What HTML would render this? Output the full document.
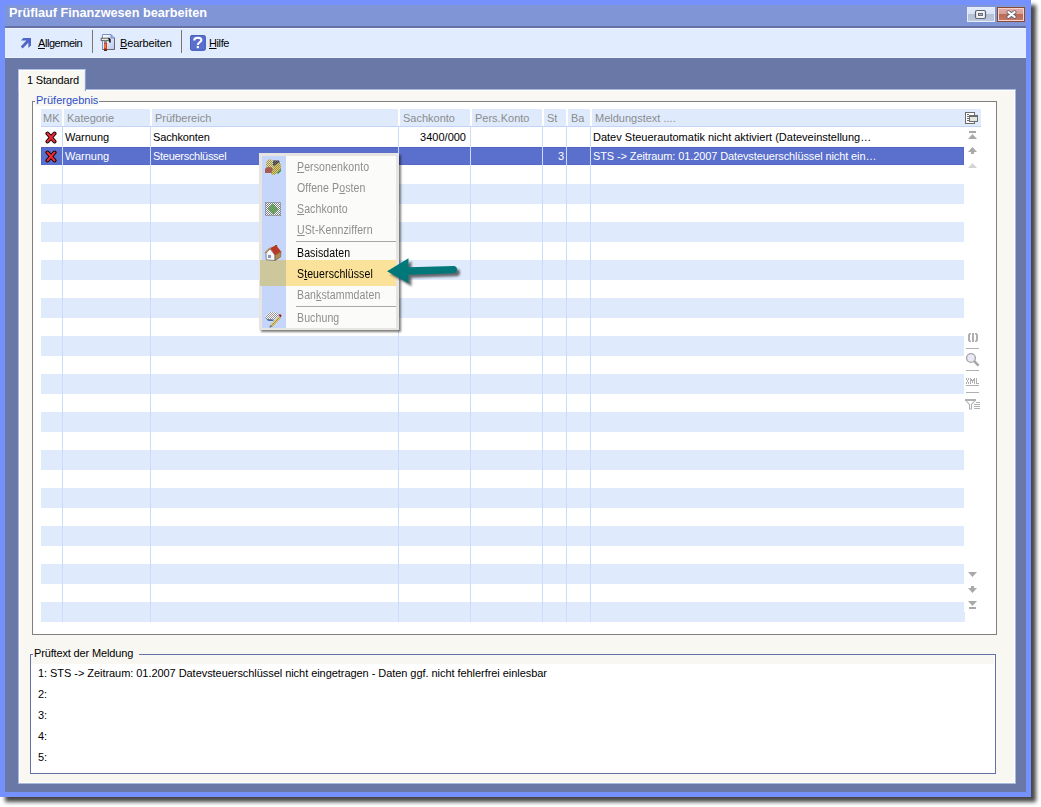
<!DOCTYPE html>
<html><head><meta charset="utf-8"><style>
*{margin:0;padding:0;box-sizing:border-box}
html,body{width:1041px;height:807px;overflow:hidden;background:#fff;position:relative;font-family:"Liberation Sans",sans-serif;font-size:11px;color:#000}
div{position:absolute}
.t{white-space:nowrap;line-height:13px;font-size:11px}
.r{left:41px;width:923px;height:20px}
.hc{top:109px;height:17px;background:#dfebfd}
.cl{top:127px;width:1px;height:495px;background:#cbdcfa}
.sl{top:147px;width:1px;height:18px;background:#cbdcfa}
.gt{color:#a0a0a0}
.ht{color:#8c8c8c}
u{text-decoration:underline;text-decoration-thickness:1px;text-underline-offset:1px}
</style></head><body>
<div id="shadow" style="left:0;top:0;width:1031px;height:797px;box-shadow:5px 5px 4px rgba(0,0,0,.72)"></div>
<div id="win" style="left:0;top:0;width:1031px;height:797px;background:#7591fe"></div>
<div style="left:5px;top:5px;width:1021px;height:21px;background:#7f95d6"></div>
<div class="t" style="left:9px;top:6px;color:#fff;font-weight:bold;font-size:12.7px;line-height:15px">Prüflauf Finanzwesen bearbeiten</div>
<div style="left:967px;top:7px;width:28px;height:15px;background:linear-gradient(#e2ebfb 0,#d8e3f6 46%,#b3c0d6 46%,#bcc8dc 100%);border:1px solid #e6eefc"></div>
<svg style="position:absolute;left:967px;top:7px" width="28" height="15" viewBox="0 0 28 15">
 <rect x="8.5" y="3.5" width="10" height="8" rx="1.5" fill="#f2f2f0" stroke="#5c6070" stroke-width="1.2"/>
 <rect x="11.5" y="6.5" width="4" height="2" fill="#a8bccc" stroke="#5c6070" stroke-width="0.9"/>
</svg>
<div style="left:997px;top:7px;width:28px;height:15px;background:linear-gradient(#e2aca4 0,#d89e96 46%,#bc6a56 46%,#c47864 100%);border:1px solid #8a4a3a;box-shadow:inset 0 0 0 1px #f4d4cc"></div>
<svg style="position:absolute;left:997px;top:7px" width="28" height="15" viewBox="0 0 28 15">
 <path d="M11.4,5.2 L17.6,9.8 M17.6,5.2 L11.4,9.8" stroke="#5a5e6a" stroke-width="3.8" stroke-linecap="round"/>
 <path d="M11.4,5.2 L17.6,9.8 M17.6,5.2 L11.4,9.8" stroke="#ffffff" stroke-width="2.2" stroke-linecap="round"/>
</svg>
<div style="left:5px;top:26px;width:1021px;height:2px;background:#6670a6"></div>
<div style="left:5px;top:28px;width:1021px;height:30px;background:#e1edfe;border-top:1px solid #eef5ff;border-bottom:1px solid #ecf4ff"></div>
<div style="left:5px;top:58px;width:1021px;height:734px;background:#6a78a7"></div>
<!-- toolbar -->
<div class="t" style="left:38px;top:37px;letter-spacing:-0.45px"><u>A</u>llgemein</div>
<div style="left:92px;top:30px;width:1px;height:23px;background:#7a7870"></div>
<div class="t" style="left:120px;top:37px;letter-spacing:-0.16px"><u>B</u>earbeiten</div>
<div style="left:181px;top:30px;width:1px;height:23px;background:#7a7870"></div>
<div class="t" style="left:209px;top:37px;letter-spacing:-0.4px"><u>H</u>ilfe</div>
<div style="left:190px;top:35px;width:16px;height:16px;background:#5b6fc8;border-radius:3px"></div>
<!-- tab + panel -->
<div style="left:18px;top:89px;width:998px;height:695px;background:#f8f7f2;border:1px solid #a8b8de;box-shadow:inset 1px 1px 0 #fff,inset -1px -1px 0 #fdfdfa"></div>
<div style="left:18px;top:69px;width:68px;height:22px;background:#f8f7f2;border-top:1px solid #b4c2e6;border-left:1px solid #b4c2e6;border-right:1px solid #8e9cce;box-shadow:inset 1px 1px 0 #fff,inset -1px 0 0 #e4eaf6"></div>
<div style="left:19px;top:90px;width:65px;height:1px;background:#f8f7f2"></div>
<div class="t" style="left:27px;top:74px;letter-spacing:-0.2px">1 Standard</div>
<!-- group box 1 -->
<div style="left:32px;top:101px;width:965px;height:534px;background:#fff;border:1px solid #808080"></div>
<div style="left:35px;top:95px;width:64px;height:11px;background:#f8f7f2"></div>
<div class="t" style="left:36px;top:94px;color:#2f4ecb">Prüfergebnis</div>
<div class="hc" style="left:41px;width:21px"></div><div class="hc" style="left:64px;width:86px"></div><div class="hc" style="left:152px;width:246px"></div><div class="hc" style="left:400px;width:70px"></div><div class="hc" style="left:472px;width:70px"></div><div class="hc" style="left:544px;width:22px"></div><div class="hc" style="left:568px;width:22px"></div><div class="hc" style="left:592px;width:389px"></div>
<div style="left:41px;top:126px;width:940px;height:1px;background:#c3d5f7"></div>
<div class="r" style="top:184px;background:#dfebfd"></div><div class="r" style="top:222px;background:#dfebfd"></div><div class="r" style="top:260px;background:#dfebfd"></div><div class="r" style="top:298px;background:#dfebfd"></div><div class="r" style="top:336px;background:#dfebfd"></div><div class="r" style="top:374px;background:#dfebfd"></div><div class="r" style="top:412px;background:#dfebfd"></div><div class="r" style="top:450px;background:#dfebfd"></div><div class="r" style="top:488px;background:#dfebfd"></div><div class="r" style="top:526px;background:#dfebfd"></div><div class="r" style="top:564px;background:#dfebfd"></div><div class="r" style="top:602px;background:#dfebfd"></div>
<div class="cl" style="left:62px"></div><div class="cl" style="left:150px"></div><div class="cl" style="left:398px"></div><div class="cl" style="left:470px"></div><div class="cl" style="left:542px"></div><div class="cl" style="left:566px"></div><div class="cl" style="left:590px"></div>
<div style="left:964px;top:612px;width:1px;height:10px;background:#dfebfd"></div>
<div style="left:41px;top:147px;width:923px;height:18px;background:#5a70cc;box-shadow:inset 1px 1px 0 #5064c6,inset -1px -1px 0 #5468c8"></div>
<div class="sl" style="left:62px"></div><div class="sl" style="left:150px"></div><div class="sl" style="left:398px"></div><div class="sl" style="left:470px"></div><div class="sl" style="left:542px"></div><div class="sl" style="left:566px"></div><div class="sl" style="left:590px"></div>
<div class="t" style="left:43px;top:112px;color:#8c8c8c">MK</div>
<div class="t" style="left:67px;top:112px;color:#8c8c8c">Kategorie</div>
<div class="t" style="left:155px;top:112px;color:#8c8c8c">Prüfbereich</div>
<div class="t" style="left:403px;top:112px;color:#8c8c8c">Sachkonto</div>
<div class="t" style="left:475px;top:112px;color:#8c8c8c">Pers.Konto</div>
<div class="t" style="left:547px;top:112px;color:#8c8c8c">St</div>
<div class="t" style="left:571px;top:112px;color:#8c8c8c">Ba</div>
<div class="t" style="left:595px;top:112px;color:#8c8c8c">Meldungstext ....</div>
<div class="t" style="left:65px;top:131px;">Warnung</div>
<div class="t" style="left:153px;top:131px;letter-spacing:-0.15px">Sachkonten</div>
<div class="t" style="left:400px;top:131px;width:66px;text-align:right">3400/000</div>
<div class="t" style="left:593px;top:131px;">Datev Steuerautomatik nicht aktiviert (Dateveinstellung…</div>
<div class="t" style="left:65px;top:150px;color:#fff">Warnung</div>
<div class="t" style="left:153px;top:150px;color:#fff;letter-spacing:-0.29px">Steuerschlüssel</div>
<div class="t" style="left:544px;top:150px;width:20px;text-align:right;color:#fff">3</div>
<div class="t" style="left:593px;top:150px;color:#fff;letter-spacing:-0.11px">STS -&gt; Zeitraum: 01.2007 Datevsteuerschlüssel nicht ein…</div>
<!-- group box 2 -->
<div style="left:30px;top:654px;width:966px;height:120px;background:#fff;border:1px solid #6271a8"></div>
<div style="left:31px;top:655px;width:963px;height:9px;background:#f8f7f2"></div>
<div style="left:33px;top:648px;width:106px;height:10px;background:#f8f7f2"></div>
<div class="t" style="left:34px;top:647px;letter-spacing:-0.15px">Prüftext der Meldung</div>
<div class="t" style="left:38px;top:667px;letter-spacing:-0.053px">1: STS -&gt; Zeitraum: 01.2007 Datevsteuerschlüssel nicht eingetragen - Daten ggf. nicht fehlerfrei einlesbar</div>
<div class="t" style="left:38px;top:688px;">2:</div>
<div class="t" style="left:38px;top:709px;">3:</div>
<div class="t" style="left:38px;top:730px;">4:</div>
<div class="t" style="left:38px;top:751px;">5:</div>
<!-- context menu -->
<div style="left:259px;top:153px;width:140px;height:177px;background:#e6e5e2;box-shadow:2px 2px 2px rgba(0,0,0,.5)"></div>
<div style="left:262px;top:156px;width:134px;height:172px;background:#fbfbf9"></div>
<div style="left:262px;top:156px;width:24px;height:172px;background:#c6d6fa"></div>
<div style="left:260px;top:260px;width:136px;height:26px;background:#fbe29a"></div>
<div style="left:260px;top:260px;width:26px;height:26px;background:#cdc79c"></div>
<div style="left:296px;top:241px;width:100px;height:1px;background:#a8a8a8"></div>
<div style="left:296px;top:306px;width:100px;height:1px;background:#a8a8a8"></div>
<div class="t" style="left:297px;top:161px;color:#8e8e8e;font-size:12px;letter-spacing:0.1px;transform:scaleX(0.88);transform-origin:0 0"><u>P</u>ersonenkonto</div>
<div class="t" style="left:297px;top:182px;color:#8e8e8e;font-size:12px;letter-spacing:0.1px;transform:scaleX(0.88);transform-origin:0 0">Offene P<u>o</u>sten</div>
<div class="t" style="left:297px;top:203px;color:#8e8e8e;font-size:12px;letter-spacing:0.1px;transform:scaleX(0.88);transform-origin:0 0"><u>S</u>achkonto</div>
<div class="t" style="left:297px;top:224px;color:#8e8e8e;font-size:12px;letter-spacing:0.1px;transform:scaleX(0.88);transform-origin:0 0"><u>U</u>St-Kennziffern</div>
<div class="t" style="left:297px;top:247px;font-size:12px;letter-spacing:0.1px;transform:scaleX(0.88);transform-origin:0 0">Basisdaten</div>
<div class="t" style="left:297px;top:268px;font-size:12px;letter-spacing:0.1px;transform:scaleX(0.88);transform-origin:0 0">S<u>t</u>euerschlüssel</div>
<div class="t" style="left:297px;top:289px;color:#8e8e8e;font-size:12px;letter-spacing:0.1px;transform:scaleX(0.88);transform-origin:0 0">Ban<u>k</u>stammdaten</div>
<div class="t" style="left:297px;top:312px;color:#8e8e8e;font-size:12px;letter-spacing:0.1px;transform:scaleX(0.88);transform-origin:0 0">Buchung</div>

<!-- ICONS -->
<svg style="position:absolute;left:18px;top:34px" width="16" height="16" viewBox="0 0 16 16">
 <path d="M5.2,4 L13,4 L13,11.6 L10.4,14 L10.4,8.8 L4.6,14.4 L2.8,12.6 L8.4,6.6 L3,6.6 Z" fill="#4f67c9"/>
</svg>
<svg style="position:absolute;left:99px;top:32px" width="20" height="20" viewBox="0 0 20 20">
 <defs><linearGradient id="dg" x1="0" y1="0" x2="1" y2="1"><stop offset="0" stop-color="#ffffff"/><stop offset="1" stop-color="#b8c8f4"/></linearGradient></defs>
 <path d="M3.5,2.5 L12,2.5 L15.5,6 L15.5,17.5 L3.5,17.5 Z" fill="url(#dg)" stroke="#8090c8" stroke-width="1"/>
 <path d="M15.5,6 L15.5,17.5 L3.5,17.5" fill="none" stroke="#6a6a6a" stroke-width="1"/>
 <path d="M12,2.5 L12,6 L15.5,6" fill="#9ab4f0" stroke="#6a7ab8" stroke-width="0.8"/>
 <rect x="2.2" y="6.2" width="7.8" height="2.4" fill="#e8e8e8" stroke="#606060" stroke-width="1"/>
 <path d="M9.5,6.5 C11,6.5 11.2,8 10.8,10.5" fill="none" stroke="#101010" stroke-width="1.6"/>
 <rect x="5" y="8.5" width="3" height="2.5" fill="#8a8a8a"/>
 <rect x="5" y="11" width="3" height="7.6" fill="#d83a10"/>
 <rect x="5.6" y="12" width="1" height="4" fill="#f4b060"/>
 <rect x="5" y="17.6" width="3" height="1.2" fill="#202020"/>
</svg>
<svg style="position:absolute;left:190px;top:35px" width="16" height="16" viewBox="0 0 16 16">
 <rect x="0.5" y="0.5" width="14.5" height="14.5" rx="1.6" fill="#5a70cc" stroke="#4a60c2" stroke-width="1"/>
 <path d="M4.2,5.4 C4.2,1.9 11.4,1.9 11.4,5 C11.4,7.2 7.8,7.4 7.8,10" fill="none" stroke="#ffffff" stroke-width="2.1"/>
 <rect x="6.7" y="11" width="2.2" height="2.2" fill="#ffffff"/>
</svg>
<svg style="position:absolute;left:45px;top:131px" width="12" height="13" viewBox="0 0 12 13">
 <path d="M2.5,2.5 L9.5,10.5 M9.5,2.5 L2.5,10.5" stroke="#000" stroke-width="4" stroke-linecap="round"/>
 <path d="M2.5,2.5 L9.5,10.5 M9.5,2.5 L2.5,10.5" stroke="#f02a34" stroke-width="2.2" stroke-linecap="round"/>
</svg>
<svg style="position:absolute;left:45px;top:150px" width="12" height="13" viewBox="0 0 12 13">
 <path d="M2.5,2.5 L9.5,10.5 M9.5,2.5 L2.5,10.5" stroke="#000" stroke-width="4" stroke-linecap="round"/>
 <path d="M2.5,2.5 L9.5,10.5 M9.5,2.5 L2.5,10.5" stroke="#f02a34" stroke-width="2.2" stroke-linecap="round"/>
</svg>
<svg style="position:absolute;left:964px;top:111px" width="16" height="14" viewBox="0 0 16 14">
 <rect x="1.5" y="1.5" width="9" height="11" fill="#fff" stroke="#6c6c6c" stroke-width="1"/>
 <path d="M3,3.5 H5 M3,5.5 H5 M3,7.5 H5 M3,9.5 H5" stroke="#6c6c6c" stroke-width="1"/>
 <rect x="5.5" y="4.5" width="8" height="6" fill="#e6e6de" stroke="#6c6c6c" stroke-width="1"/>
 <rect x="5" y="4" width="9" height="2" fill="#6c6c6c"/>
</svg>
<!-- side icons -->
<svg style="position:absolute;left:964px;top:128px" width="18" height="500" viewBox="0 0 18 500">
 <g fill="#a9a9a9">
  <rect x="5" y="3" width="7" height="2"/>
  <path d="M4,11 L8.5,6 L13,11 Z"/>
  <path d="M4,24 L8.5,19 L13,24 Z"/><rect x="7" y="24" width="3" height="2"/>
  <path d="M4,40 L8.5,35 L13,40 Z" fill="#d4d4d4"/>
  <path d="M4,444 L8.5,449 L13,444 Z"/>
  <rect x="7" y="458" width="3" height="2"/><path d="M4,460 L8.5,465 L13,460 Z"/>
  <path d="M4,473 L8.5,478 L13,473 Z"/><rect x="5" y="479" width="7" height="2"/>
 </g>
</svg>
<svg style="position:absolute;left:964px;top:330px" width="18" height="82" viewBox="0 0 18 82">
 <g fill="#b0b0b0">
  <rect x="4" y="4" width="2" height="7"/><rect x="5" y="3" width="2" height="1.6"/><rect x="5" y="10.4" width="2" height="1.6"/>
  <rect x="8" y="3" width="2" height="9"/>
  <rect x="12" y="4" width="2" height="7"/><rect x="11" y="3" width="2" height="1.6"/><rect x="11" y="10.4" width="2" height="1.6"/>
  <rect x="2" y="18" width="13" height="1"/>
  <rect x="2" y="40" width="13" height="1"/>
  <rect x="2" y="48" width="1" height="1"/><rect x="4" y="48" width="1" height="1"/><rect x="2" y="49" width="1" height="1"/><rect x="4" y="49" width="1" height="1"/><rect x="2" y="52" width="1" height="1"/><rect x="4" y="52" width="1" height="1"/><rect x="2" y="53" width="1" height="1"/><rect x="4" y="53" width="1" height="1"/><rect x="3" y="50" width="1" height="2"/><rect x="6" y="48" width="1" height="6"/><rect x="10" y="48" width="1" height="6"/><rect x="7" y="49" width="1" height="2"/><rect x="9" y="49" width="1" height="2"/><rect x="8" y="50" width="1" height="3"/><rect x="12" y="48" width="1" height="6"/><rect x="12" y="53" width="3" height="1"/>
  <rect x="2" y="55" width="13" height="1"/>
  <rect x="2" y="62" width="13" height="1"/>
  <rect x="1" y="69" width="11" height="2"/>
  
 </g>
 <circle cx="7" cy="28" r="4.4" fill="#e8e8f6" stroke="#a8a8a8" stroke-width="1.4"/>
 <path d="M10.2,31.2 L14.6,35.6" stroke="#a8a8a8" stroke-width="2.6"/>
 <path d="M1.8,70.5 L5.5,74.5 V79 H7.5 V74.5 L11.2,70.5" fill="none" stroke="#b0b0b0" stroke-width="1.1"/>
 <path d="M12,72.5 H16 M10,74.5 H16 M10,76.5 H16 M10,78.5 H16" stroke="#b0b0b0" stroke-width="1"/>
</svg>
<!-- menu icons -->
<svg style="position:absolute;left:265px;top:159px" width="16" height="16" viewBox="0 0 16 16">
 <defs><pattern id="ck1" width="2" height="2" patternUnits="userSpaceOnUse"><rect width="1" height="1" fill="#7a7a8a"/><rect x="1" y="1" width="1" height="1" fill="#7a7a8a"/></pattern>
 <clipPath id="cp1"><ellipse cx="5" cy="5.5" rx="4" ry="5.2"/><path d="M8,1.5 L14,1.5 L15,5 L10,9 L8,6 Z"/><path d="M0,11 Q0,8 4,8 Q8,8 8,11 V14 H0 Z"/><path d="M9,7 L14,3.5 L16,6 L16,11 L9,16 L6,15 Z"/></clipPath></defs>
 <ellipse cx="5" cy="5.5" rx="4" ry="5.2" fill="#f0e070"/>
 <path d="M8,1.5 L14,1.5 L15,5 L10,9 L8,6 Z" fill="#404040"/>
 <path d="M0,11 Q0,8 4,8 Q8,8 8,11 V14 H0 Z" fill="#c04830"/>
 <path d="M9,7 L14,3.5 L16,6 L16,11 L9,16 L6,15 Z" fill="#e8d040"/>
 <path d="M12,14 L16,10 L16,12 L13,15 Z" fill="#2a8a3a"/>
 <rect x="0" y="0" width="16" height="16" fill="url(#ck1)" opacity=".8" clip-path="url(#cp1)"/>
</svg>
<svg style="position:absolute;left:265px;top:202px" width="16" height="14" viewBox="0 0 16 14">
 <defs><pattern id="ck2" width="2" height="2" patternUnits="userSpaceOnUse"><rect width="1" height="1" fill="#787c84"/><rect x="1" y="1" width="1" height="1" fill="#787c84"/></pattern></defs>
 <rect x="0" y="0" width="16" height="14" fill="#ffffff"/>
 <path d="M8,1.5 L13.5,7 L8,12.5 L2.5,7 Z" fill="#60c040"/>
 <rect x="0" y="0" width="16" height="14" fill="url(#ck2)"/>
 <rect x="0.5" y="0.5" width="15" height="13" fill="none" stroke="#8a8e96" stroke-width="1" opacity=".7"/>
</svg>
<svg style="position:absolute;left:264px;top:244px" width="18" height="18" viewBox="0 0 18 18">
 <rect x="11" y="1" width="2.2" height="3.5" fill="#8a5a30"/>
 <path d="M2,9 L6,5 L11,11 L11,16.5 L2.2,15.8 Z" fill="#f6f6fa" stroke="#6a7078" stroke-width="0.8"/>
 <path d="M11,11 L17,7.5 L16.6,13 L11,16.5 Z" fill="#b08850" stroke="#6a5a40" stroke-width="0.6"/>
 <path d="M6,4 L12,1.2 L17.2,7.4 L11,11.2 Z" fill="#b83a24"/>
 <path d="M1,9.2 L6,4" stroke="#b09060" stroke-width="1.6"/>
 <rect x="4" y="11" width="3" height="3" fill="#8898b0"/>
</svg>
<svg style="position:absolute;left:264px;top:310px" width="18" height="18" viewBox="0 0 18 18">
 <defs><pattern id="ck3" width="2" height="2" patternUnits="userSpaceOnUse"><rect width="1" height="1" fill="#7c7c84"/><rect x="1" y="1" width="1" height="1" fill="#7c7c84"/></pattern>
 <clipPath id="cp3"><path d="M1,7 L6,2 L13,2.5 L15,4.5 L10,10 L4,11 Z"/><path d="M6.2,15.2 L14.8,6.4 L16.6,8.2 L8,17 Z"/></clipPath></defs>
 <path d="M1,7 L6,2 L13,2.5 L15,4.5 L10,10 L4,11 Z" fill="#ffffff"/>
 <path d="M1,7 L4,11 L9.5,11 L9,9.5 L3.5,9 Z" fill="#3a68a8"/>
 <path d="M6.2,15.2 L14.8,6.4 L16.6,8.2 L8,17 Z" fill="#f0d040"/>
 <path d="M14.6,5.2 L16,4 L17.6,5.6 L16.6,7.6 Z" fill="#a01818"/>
 <rect x="0" y="0" width="18" height="18" fill="url(#ck3)" opacity=".85" clip-path="url(#cp3)"/>
 <path d="M5.4,17.6 L6.2,15.2 L8,17 Z" fill="#606060"/>
</svg>
<!-- arrow -->
<svg style="position:absolute;left:380px;top:250px" width="90" height="45" viewBox="0 0 90 45">
 <defs><filter id="ab" x="-10%" y="-30%" width="120%" height="160%"><feGaussianBlur stdDeviation="0.8"/></filter></defs>
 <g transform="translate(3,3)" fill="#303030" opacity=".7" filter="url(#ab)">
  <path d="M7,21.2 L28.5,8.2 L28.5,17.2 L73.5,16 Q77,16 77,19.6 Q77,23.2 73.5,23.2 L28.5,24.8 L28.5,33.3 Z"/>
 </g>
 <path d="M7,21.2 L28.5,8.2 L28.5,17.2 L73.5,16 Q77,16 77,19.6 Q77,23.2 73.5,23.2 L28.5,24.8 L28.5,33.3 Z" fill="#00787a"/>
</svg>
</body></html>
